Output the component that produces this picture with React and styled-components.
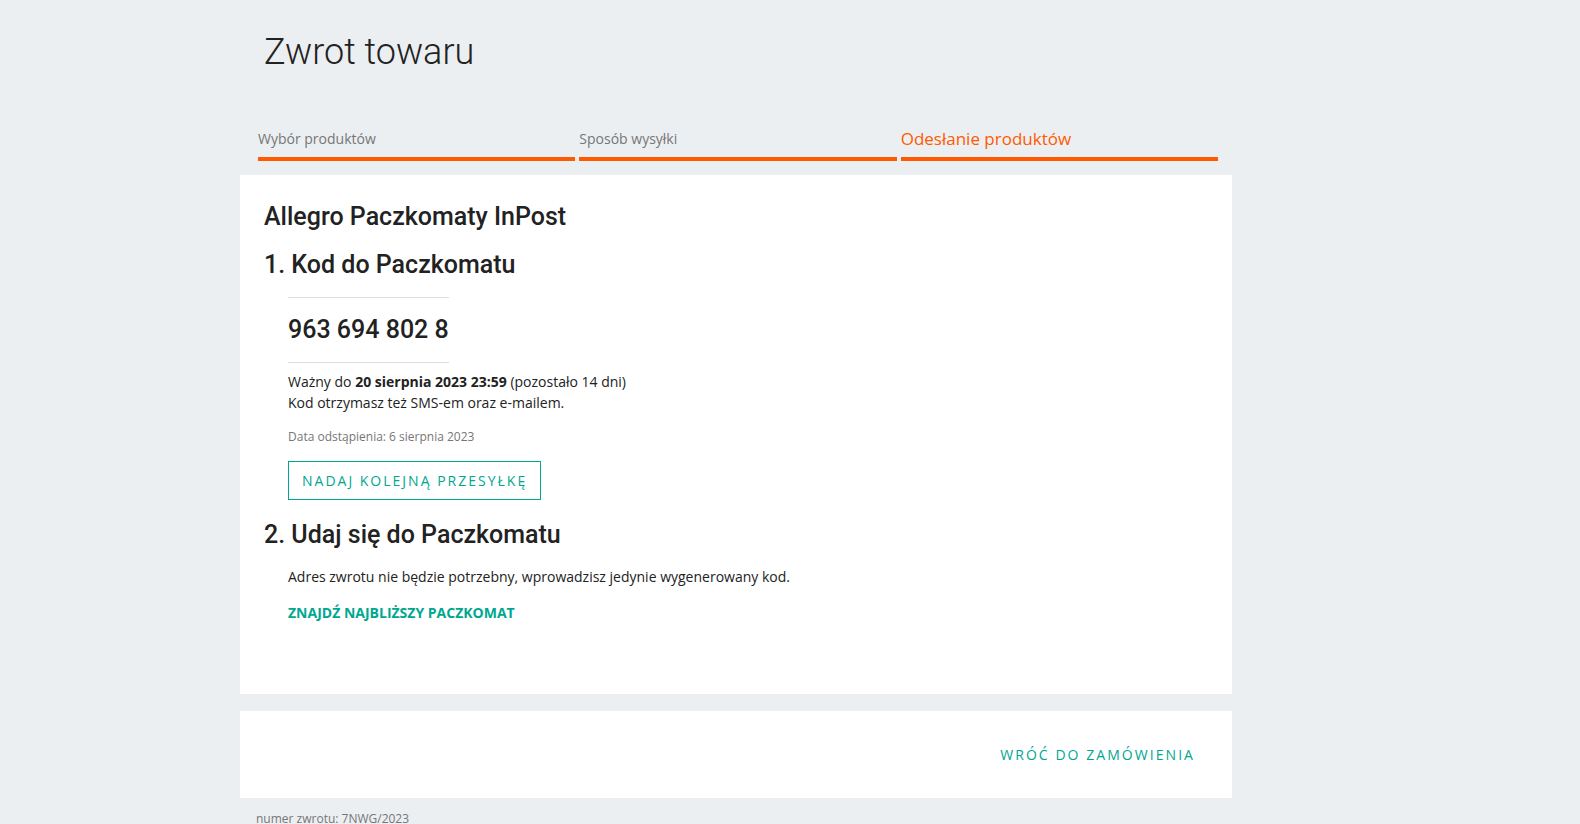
import styled, { createGlobalStyle } from 'styled-components';

const GlobalStyle = createGlobalStyle`
  body {
    margin: 0;
    background: #eceff2;
    font-family: 'Open Sans', 'Liberation Sans', sans-serif;
    color: #222;
  }
`;

const Page = styled.div`
  width: 992px;
  margin-left: 240px;
  padding-top: 30px;
`;

const Title = styled.h1`
  font-family: Roboto, 'Liberation Sans', sans-serif;
  font-weight: 300;
  font-size: 36px;
  line-height: 44px;
  color: #222;
  margin: 0 0 0 24px;
`;

const Steps = styled.div`
  display: flex;
  gap: 4px;
  margin: 55px 14px 14px 18px;
`;

const Step = styled.div`
  flex: 1;
  line-height: 20px;
  color: ${(p) => (p.active ? '#ff5a00' : '#767676')};
  font-size: ${(p) => (p.active ? '17px' : '14px')};
  padding-bottom: 8px;
  border-bottom: 4px solid #ff5a00;
`;

const Card = styled.section`
  background: #fff;
  padding: ${(p) => p.pad};
  margin-bottom: 17px;
`;

const Heading = styled.h2`
  font-family: Roboto, 'Liberation Sans', sans-serif;
  font-weight: 500;
  font-size: 25px;
  line-height: 33px;
  margin: 0 0 15px;
  color: #222;
`;

const Indent = styled.div`
  padding-left: 24px;
`;

const CodeBox = styled.div`
  width: max-content;
  white-space: nowrap;
  border-top: 1px solid #ddd;
  border-bottom: 1px solid #ddd;
  padding: 16px 0;
  font-family: Roboto, 'Liberation Sans', sans-serif;
  font-weight: 500;
  font-size: 25px;
  line-height: 32px;
  color: #222;
  margin: 16px 0 8px;
`;

const Text = styled.p`
  font-size: 14px;
  line-height: 21px;
  margin: 0;
  color: #222;
`;

const Small = styled.p`
  font-size: 12px;
  color: #767676;
  margin: 15px 0 16px;
`;

const OutlineButton = styled.button`
  height: 39px;
  padding: 0 13px;
  border: 1px solid #00a790;
  background: #fff;
  color: #00a790;
  font-family: 'Open Sans', 'Liberation Sans', sans-serif;
  font-size: 14px;
  letter-spacing: 2px;
  margin-bottom: 18px;
`;

const Link = styled.a`
  display: inline-block;
  margin-top: 16px;
  font-size: 14px;
  font-weight: 700;
  color: #00a790;
  text-decoration: none;
`;

const Footer = styled.div`
  display: flex;
  justify-content: flex-end;
  align-items: center;
  height: 87px;
  padding-right: 37px;
`;

const TextLink = styled.a`
  font-size: 14px;
  letter-spacing: 2.05px;
  color: #00a790;
`;

const ReturnNo = styled.div`
  font-size: 12px;
  color: #767676;
  margin: -5px 0 0 16px;
`;

export default function App() {
  return (
    <>
      <GlobalStyle />
      <Page>
        <Title>Zwrot towaru</Title>
        <Steps>
          <Step>Wybór produktów</Step>
          <Step>Sposób wysyłki</Step>
          <Step active>Odesłanie produktów</Step>
        </Steps>
        <Card pad="25px 24px 71px">
          <Heading>Allegro Paczkomaty InPost</Heading>
          <Heading>1. Kod do Paczkomatu</Heading>
          <Indent>
            <CodeBox>963 694 802 8</CodeBox>
            <Text>
              Ważny do <b>20 sierpnia 2023 23:59</b> (pozostało 14 dni)
            </Text>
            <Text>Kod otrzymasz też SMS-em oraz e-mailem.</Text>
            <Small>Data odstąpienia: 6 sierpnia 2023</Small>
            <OutlineButton>NADAJ KOLEJNĄ PRZESYŁKĘ</OutlineButton>
          </Indent>
          <Heading>2. Udaj się do Paczkomatu</Heading>
          <Indent>
            <Text>Adres zwrotu nie będzie potrzebny, wprowadzisz jedynie wygenerowany kod.</Text>
            <Link>ZNAJDŹ NAJBLIŻSZY PACZKOMAT</Link>
          </Indent>
        </Card>
        <Card pad="0">
          <Footer>
            <TextLink>WRÓĆ DO ZAMÓWIENIA</TextLink>
          </Footer>
        </Card>
        <ReturnNo>numer zwrotu: 7NWG/2023</ReturnNo>
      </Page>
    </>
  );
}
